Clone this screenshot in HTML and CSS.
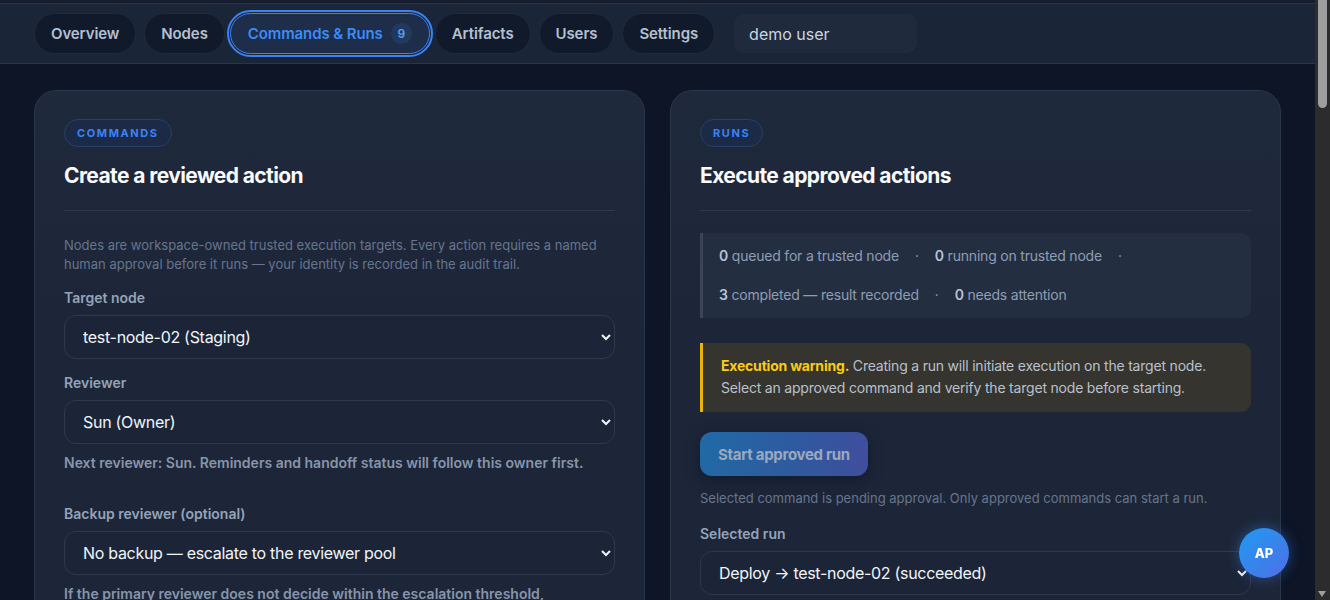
FILE: index.html
```html
<!DOCTYPE html>
<html lang="en">
	<head>
		<meta charset="utf-8">
		<meta name="viewport" content="width=device-width, initial-scale=1.0">
		<title>Commands &amp; Runs</title>
		<link rel="stylesheet" href="styles.css">
	</head>
	<body>
		<header class="topbar">
			<nav class="tabs">
				<a class="tab" href="#">Overview</a>
				<a class="tab" href="#">Nodes</a>
				<a class="tab tab-active" href="#">Commands &amp; Runs <span class="tab-count">9</span></a>
				<a class="tab" href="#">Artifacts</a>
				<a class="tab" href="#">Users</a>
				<a class="tab" href="#">Settings</a>
				<div class="user-box">demo user</div>
			</nav>
		</header>

		<main class="page">
			<!-- commands -->
			<section class="card">
				<span class="eyebrow">COMMANDS</span>
				<h2 class="card-title">Create a reviewed action</h2>
				<hr class="divider">
				<p class="intro">Nodes are workspace-owned trusted execution targets. Every action requires a named human approval before it runs — your identity is recorded in the audit trail.</p>

				<label class="field-label" for="node">Target node</label>
				<select class="field" id="node">
					<option>test-node-02 (Staging)</option>
				</select>

				<label class="field-label" for="reviewer">Reviewer</label>
				<select class="field" id="reviewer">
					<option>Sun (Owner)</option>
				</select>
				<p class="hint">Next reviewer: Sun. Reminders and handoff status will follow this owner first.</p>

				<label class="field-label gap-big" for="backup">Backup reviewer (optional)</label>
				<select class="field" id="backup">
					<option>No backup — escalate to the reviewer pool</option>
				</select>
				<p class="hint">If the primary reviewer does not decide within the escalation threshold, automatically hand the request to the reviewer pool.</p>
				<div class="spacer"></div>
			</section>

			<!-- runs -->
			<section class="card">
				<span class="eyebrow">RUNS</span>
				<h2 class="card-title">Execute approved actions</h2>
				<hr class="divider">

				<div class="stats">
					<span class="stat"><b>0</b> queued for a trusted node</span><span class="sep">·</span>
					<span class="stat"><b>0</b> running on trusted node</span><span class="sep">·</span>
					<span class="stat"><b>3</b> completed — result recorded</span><span class="sep">·</span>
					<span class="stat"><b>0</b> needs attention</span>
				</div>

				<div class="warning">
					<b>Execution warning.</b> Creating a run will initiate execution on the target node. Select an approved command and verify the target node before starting.
				</div>

				<div><button class="btn-run" disabled>Start approved run</button></div>
				<p class="caption">Selected command is pending approval. Only approved commands can start a run.</p>

				<label class="field-label run-label" for="run">Selected run</label>
				<select class="field" id="run">
					<option>Deploy → test-node-02 (succeeded)</option>
				</select>
				<div class="spacer"></div>
			</section>
		</main>

		<div class="avatar">AP</div>
		<div class="scrollbar"><div class="scroll-thumb"></div><div class="scroll-arrow"></div></div>
	</body>
</html>
```

FILE: styles.css
```css
html { color-scheme: dark; background: #0d1526; }
body { margin: 0 15px 0 0; font-family: Inter, "Noto Sans", sans-serif; color: #cbd5e1; background: #0d1526; }

.topbar { background: #1b2538; border-bottom: 1px solid #2a3548; box-shadow: inset 0 3px 0 #151d2c, inset 0 4px 0 #2a3548; padding: 13px 34px 9px; }
.tabs { display: flex; align-items: center; gap: 8px; }
.tab { display: inline-flex; align-items: center; gap: 8px; height: 41px; box-sizing: border-box; padding: 0 16px; border-radius: 21px; background: #111a2a; border: 1px solid #1e2a3d; color: #b4c0d2; font-size: 15px; font-weight: 600; text-decoration: none; letter-spacing: -0.1px; }
.tab-active { background: #1d2d4a; border: 1px solid #3b82f6; outline: 2px solid #3b82f6; outline-offset: 1px; color: #3b8cf5; padding: 0 17px; margin: 0 -3px; }
.tab-count { display: inline-flex; align-items: center; justify-content: center; width: 21px; height: 21px; border-radius: 50%; background: #22395e; color: #5a9ff5; font-size: 12px; font-weight: 600; }
.user-box { margin-left: 11px; width: 183px; height: 39px; box-sizing: border-box; padding: 0 15px; display: flex; align-items: center; border-radius: 10px; background: #1f2a3d; color: #cbd5e1; font-size: 16px; }

.page { display: grid; grid-template-columns: 1fr 1fr; gap: 25px; padding: 26px 34px 40px; }
.card { display: flex; flex-direction: column; align-items: stretch; background: linear-gradient(180deg, #1f293c 0%, #1d2638 40%); border: 1px solid #2a3649; border-radius: 22px; padding: 28px 29px; }

.eyebrow { align-self: flex-start; height: 28px; box-sizing: border-box; display: inline-flex; align-items: center; padding: 0 12px; border-radius: 14px; background: #1b2b47; border: 1px solid #2a3f63; color: #3b82f6; font-size: 11px; font-weight: 700; letter-spacing: 1.6px; }
.card-title { margin: 15px 0 0; font-size: 21px; line-height: 28px; font-weight: 700; color: #f8fafc; letter-spacing: -0.6px; }
.divider { margin: 20px 0 0; border: 0; border-top: 1px solid #2e3a4e; }

.intro { margin: 25px 0 0; font-size: 13px; line-height: 19px; color: #66758d; }

.field-label { display: block; margin-top: 14px; font-size: 14px; line-height: 20px; font-weight: 600; color: #94a3b8; }
.gap-big { margin-top: 31px; }
.field { display: block; width: 100%; height: 44px; margin-top: 7px; padding: 0 4px 0 14px; border-radius: 12px; border: 1px solid #2d394d; background: #1c2537; color: #f1f5f9; font-family: Inter, "Noto Sans", sans-serif; font-size: 16px; letter-spacing: -0.3px; }
.hint { margin: 9px 0 0; font-size: 14px; line-height: 20px; font-weight: 600; color: #8795ab; }
.spacer { height: 40px; }

.stats { margin-top: 22px; display: flex; flex-wrap: wrap; align-items: center; column-gap: 16px; row-gap: 19px; padding: 13px 16px; border-left: 3px solid #3a4558; border-radius: 0 10px 10px 0; background: #242e41; font-size: 14px; line-height: 20px; color: #8f9db2; letter-spacing: -0.2px; }
.stats b { color: #b6c2d3; font-weight: 600; }
.sep { color: #8f9db2; }

.warning { margin-top: 25px; padding: 12px 18px 13px; border-left: 3px solid #eab308; border-radius: 0 10px 10px 0; background: #35342f; font-size: 14px; line-height: 22px; color: #b8c1cd; letter-spacing: -0.2px; }
.warning b { color: #facc15; font-weight: 700; }

.btn-run { margin-top: 20px; height: 44px; padding: 0 18px; border: 0; border-radius: 12px; background: linear-gradient(100deg, #1f6aa6 0%, #2f5a9f 55%, #404e9e 100%); color: #9aa9bd; font-family: Inter, "Noto Sans", sans-serif; font-size: 15px; font-weight: 700; letter-spacing: -0.3px; box-shadow: 0 4px 14px rgba(10, 20, 40, 0.6); }
.caption { margin: 13px 0 0; font-size: 13px; line-height: 19px; color: #66758d; }
.run-label { margin-top: 16px; }

.avatar { position: fixed; right: 41px; top: 528px; width: 50px; height: 50px; border-radius: 50%; background: linear-gradient(135deg, #1e9bf0 0%, #4f6ee8 100%); color: #fff; display: flex; align-items: center; justify-content: center; font-size: 13px; font-weight: 800; box-shadow: 0 0 14px rgba(59, 130, 246, 0.45); }

.scrollbar { position: fixed; top: 0; right: 0; bottom: 0; width: 15px; background: #2c2c2c; }
.scroll-thumb { position: absolute; top: 0; left: 3px; width: 9px; height: 108px; border-radius: 0 0 5px 5px; background: #9e9e9e; }
.scroll-arrow { position: absolute; bottom: 3px; left: 3px; width: 0; height: 0; border-left: 4.5px solid transparent; border-right: 4.5px solid transparent; border-top: 6px solid #9e9e9e; }
```
